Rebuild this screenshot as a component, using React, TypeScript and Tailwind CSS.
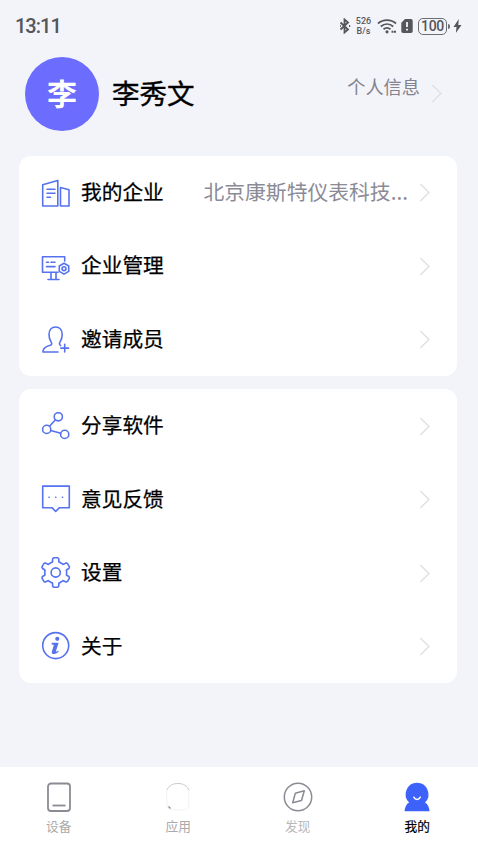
import type { ReactNode } from 'react';

const font = "font-['Noto_Sans_CJK_SC',sans-serif]";

// outline of a six-tooth gear centred on (cx, cy)
function gearPoints(cx: number, cy: number) {
  const tooth = [
    [-26, 10.9],
    [-22, 11],
    [-18, 10.9],
    [-16, 11.4],
    [-13, 13.7],
    [-11, 14.4],
    [-7, 14.8],
    [7, 14.8],
    [11, 14.4],
    [13, 13.7],
    [16, 11.4],
    [18, 10.9],
    [22, 11],
    [26, 10.9],
  ];
  const points: string[] = [];
  for (let i = 0; i < 6; i++) {
    for (const [deg, r] of tooth) {
      const a = ((i * 60 + deg - 90) * Math.PI) / 180;
      points.push(`${(cx + r * Math.cos(a)).toFixed(2)},${(cy + r * Math.sin(a)).toFixed(2)}`);
    }
  }
  return points.join(' ');
}

function RowIcon({ children }: { children: ReactNode }) {
  return (
    <svg
      viewBox="0 0 30 30"
      className="mt-0.5 h-[30px] w-[30px] shrink-0 overflow-visible text-[#5672ee]"
      fill="none"
      stroke="currentColor"
      strokeWidth="1.6"
      strokeLinecap="round"
      strokeLinejoin="round"
    >
      {children}
    </svg>
  );
}

function Chevron() {
  return (
    <svg viewBox="0 0 12 20" className="h-5 w-3 shrink-0" fill="none" stroke="#e0e0e4" strokeWidth="1.4">
      <path d="m1.300 2 8.700 8.500-8.700 8.500" />
    </svg>
  );
}

const companyIcon = (
  <RowIcon>
    <path d="M1.700 6.800 16.800 2.400V28H1.700ZM19.500 28V9.500L28 11.800V28Z" />
    <path d="M6 11.200h8M6 15.200h8M6 19.200h3.500" />
  </RowIcon>
);

const manageIcon = (
  <RowIcon>
    <path d="M23.700 9V4.700H1.500v15.500H17M10 20.500v6.500M15 20.500v6.500M7 27.500h11" />
    <path d="M5.500 10.200h2M10 10.200h4M5.500 14.600h8.500" />
    <path d="m23 11.300 4.700 2.700v5.400L23 22.100l-4.700-2.700V14Z" />
    <circle cx="23" cy="16.700" r="1.900" />
  </RowIcon>
);

const inviteIcon = (
  <RowIcon>
    <path d="M17 27H2.500c-.6 0-.8-.6-.5-1.300 1-3 3.600-4.600 7.300-5.400 1.500-.4 1.800-1.800.9-3.200-1.300-2-2.200-4.300-2.200-7.300 0-4.800 2.600-7.800 6.600-7.800s6.600 3 6.600 7.800c0 3-.9 5.300-2.200 7.300-.9 1.500-.6 2.800.7 3.300" />
    <path d="M23.700 19.200v7.800M19.800 23.100h7.800" />
  </RowIcon>
);

const shareIcon = (
  <RowIcon>
    <circle cx="17.300" cy="4.800" r="4.100" />
    <circle cx="5.700" cy="17.400" r="4.100" />
    <circle cx="23.700" cy="22.400" r="4.100" />
    <path d="m14.500 7.800-6 6.500M9.700 18.500l10 2.800" />
  </RowIcon>
);

const feedbackIcon = (
  <RowIcon>
    <path d="M1.700 1.100h26.600v21.600h-9.800l-3.800 3.600-3.800-3.600H1.700Z" />
    <path d="M8 12.200h.2M14.700 12.200h.2M21.400 12.200h.2" />
  </RowIcon>
);

const settingsIcon = (
  <RowIcon>
    <polygon points={gearPoints(14.7, 13.5)} />
    <circle cx="14.700" cy="13.500" r="4.600" />
  </RowIcon>
);

const aboutIcon = (
  <RowIcon>
    <circle cx="14.700" cy="13.600" r="13" />
    <circle cx="16.300" cy="6.800" r="2.100" fill="currentColor" stroke="none" />
    <path d="M10.600 10.800h7l-2.600 8.300c-.2.800.5.900 2.200-.5l.6.700c-1.500 1.900-3 2.700-4.700 2.700-2 0-2.700-1-2.200-2.600l1.800-5.900c.2-.8-.4-1.100-2.100-1.100Z" fill="currentColor" stroke="none" />
  </RowIcon>
);

function Row({ icon, label, value }: { icon: ReactNode; label: string; value?: string }) {
  return (
    <div className="flex h-[73.5px] items-center pr-[26px] pl-[22px]">
      {icon}
      <span className="mb-[2px] ml-2.5 text-[20.7px] leading-none whitespace-nowrap text-black [-webkit-text-stroke:0.25px_black]">
        {label}
      </span>
      <span className="mr-[11px] mb-[2px] ml-auto text-[20.8px] leading-none whitespace-nowrap text-[#8b8b97]">{value}</span>
      <Chevron />
    </div>
  );
}

function StatusBar() {
  return (
    <div className="flex h-[52px] items-center justify-between pr-4 pl-[15px] text-[#55565a]">
      <span className="font-['Roboto',sans-serif] text-[20px] font-medium tracking-[-1px]">13:11</span>
      <div className="flex items-center">
        <svg viewBox="0 0 12 16" className="h-4 w-3" fill="none" stroke="currentColor" strokeWidth="1.800">
          <path d="m1.500 4.500 7.500 7-3.500 3V1.500L9 4.500l-7.500 7" />
          <path d="M1 8h.8M10 8h1.200" />
        </svg>
        <div className="ml-1 flex w-[17px] flex-col items-center font-['Roboto',sans-serif] text-[9px] leading-[10px] font-medium">
          <span>526</span>
          <span>B/s</span>
        </div>
        <svg viewBox="0 0 20 16" className="ml-[5px] h-4 w-5" fill="none" stroke="currentColor" strokeWidth="1.900">
          <path d="M1 5.500c5-4.500 13-4.500 18 0M3.800 8.500c3.700-3.200 8.700-3.200 12.400 0M6.500 11.300c2.200-1.800 4.800-1.800 7 0" />
          <circle cx="10" cy="13.800" r="1.600" fill="currentColor" stroke="none" />
          <path d="M14.500 13.800h4.500" strokeDasharray="2 .5" />
        </svg>
        <svg viewBox="0 0 12 16" className="ml-1 h-4 w-3">
          <path d="M4 1h6a1.700 1.700 0 0 1 1.700 1.700v10.600A1.700 1.700 0 0 1 10 15H2A1.700 1.700 0 0 1 .3 13.300V4.700Z" fill="currentColor" />
          <path d="M6 4v5M6 10.800v1.800" stroke="#f3f4f9" strokeWidth="1.800" />
        </svg>
        <div className="ml-[5px] flex h-[17px] w-[29px] items-center justify-center rounded-[5px] border-[1.500px] border-[#6c6d71] font-['Roboto',sans-serif] text-[14px] leading-none font-medium tracking-[-0.3px]">
          100
        </div>
        <div className="ml-px h-[5px] w-0.5 rounded-r bg-[#6c6d71]" />
        <svg viewBox="0 0 9 16" className="ml-[3px] h-4 w-[9px]" fill="currentColor">
          <path d="M5.800 1 .5 9h3l-.6 6L8.500 7H5.300Z" />
        </svg>
      </div>
    </div>
  );
}

function Tab({ label, labelClass, children }: { label: string; labelClass: string; children: ReactNode }) {
  return (
    <div className="flex flex-1 flex-col items-center pt-[14.5px] pr-0.5">
      <svg viewBox="0 0 30 30" className="h-[30px] w-[30px]" fill="none">
        {children}
      </svg>
      <span className={`mt-[7px] text-[12.7px] leading-[14px] ${labelClass}`}>{label}</span>
    </div>
  );
}

export default function App() {
  return (
    <div lang="zh-CN" className={`flex h-[850px] w-[478px] flex-col overflow-hidden bg-[#f3f4f9] ${font}`}>
      <StatusBar />

      <header className="flex h-[103.500px] items-start pt-[5px] pr-[35px] pl-[25px]">
        <div className="flex h-[74px] w-[74px] items-center justify-center rounded-full bg-[#6c6dff] pb-[5px] text-[30px] leading-none font-bold text-white">
          李
        </div>
        <h1 className="mt-[22px] ml-[13px] text-[27.500px] leading-none text-black [-webkit-text-stroke:0.4px_black]">李秀文</h1>
        <span className="mt-5 ml-auto text-[18.200px] leading-none text-[#83838f]">个人信息</span>
        <div className="mt-[26px] ml-[11px]">
          <Chevron />
        </div>
      </header>

      <main className="flex flex-1 flex-col gap-[13px] pr-[21px] pl-[19px]">
        <section className="rounded-xl bg-white">
          <Row icon={companyIcon} label="我的企业" value="北京康斯特仪表科技..." />
          <Row icon={manageIcon} label="企业管理" />
          <Row icon={inviteIcon} label="邀请成员" />
        </section>
        <section className="rounded-xl bg-white">
          <Row icon={shareIcon} label="分享软件" />
          <Row icon={feedbackIcon} label="意见反馈" />
          <Row icon={settingsIcon} label="设置" />
          <Row icon={aboutIcon} label="关于" />
        </section>
      </main>

      <nav className="flex h-[83px] bg-white">
        <Tab label="设备" labelClass="text-[#aaaaaa]">
          <rect x="4" y="1.500" width="22" height="27.500" rx="3" stroke="#8b8b93" strokeWidth="1.800" />
          <path d="M8.500 23.500h13" stroke="#8b8b93" strokeWidth="1.800" />
        </Tab>
        <Tab label="应用" labelClass="text-[#aaaaaa]">
          <path d="M3.800 8C6 3.500 10 1.500 15 1.500c5.500 0 9.500 2.500 11 7" stroke="#c9c9d0" strokeWidth="1" />
          <path d="M3.800 8v14c0 4 2 6 6 6h10c4 0 6-1.500 6-5V8.500" stroke="#f3f3f5" strokeWidth="1" />
          <path d="m5.500 24.500 2 2" stroke="#8b8b93" strokeWidth="1.200" />
        </Tab>
        <Tab label="发现" labelClass="text-[#b8b8b8]">
          <circle cx="15" cy="15" r="13.700" stroke="#8b8b93" strokeWidth="1.500" />
          <path d="M21.300 8.800 18.500 18.500l-8.800 2.300 2.600-9.600Z" stroke="#8b8b93" strokeWidth="1.500" strokeLinejoin="round" />
        </Tab>
        <Tab label="我的" labelClass="text-black [-webkit-text-stroke:0.2px_black]">
          <path d="M15 .8a11.500 11.500 0 0 1 8 19.700c2.500 1.500 4.200 4.200 4.600 8.800H2.500c.4-4.600 2.100-7.300 4.600-8.800A11.500 11.500 0 0 1 15 .8Z" fill="#3d62fb" />
          <path d="M11.800 15.200c1.600 3 4.900 3 6.500 0" stroke="#fff" strokeWidth="1.500" strokeLinecap="round" />
        </Tab>
      </nav>
    </div>
  );
}
